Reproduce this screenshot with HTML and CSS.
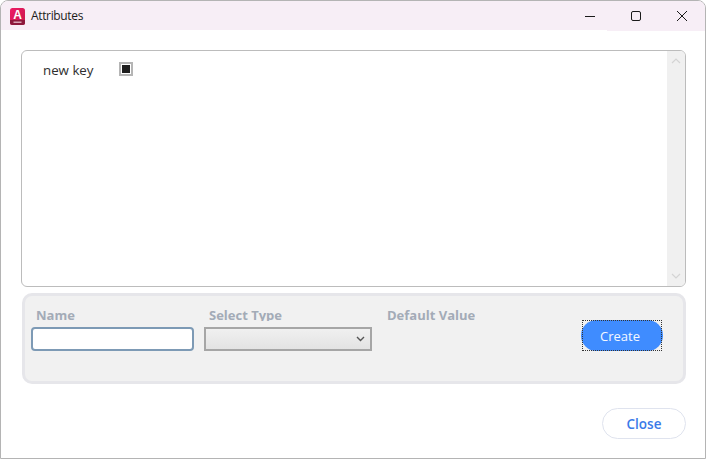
FILE: index.html
```html
<!DOCTYPE html>
<html lang="en">
<head>
<meta charset="utf-8">
<title>Attributes</title>
<link rel="stylesheet" href="styles.css">
</head>
<body>
<div class="window">
  <header class="titlebar">
    <svg class="app-icon" width="15" height="17" viewBox="0 0 15 17">
      <defs><linearGradient id="ic" x1="0" y1="0" x2="1" y2="1"><stop offset="0" stop-color="#ee1c66"/><stop offset="1" stop-color="#c8174a"/></linearGradient></defs>
      <rect x="0" y="0" width="15" height="17" rx="2.5" fill="url(#ic)"/>
      <path d="M0 12 H15 V14.5 A2.5 2.5 0 0 1 12.5 17 H2.5 A2.5 2.5 0 0 1 0 14.5 Z" fill="#8c1a3c"/>
      <text x="7.5" y="10.5" class="icon-a" text-anchor="middle">A</text>
      <rect x="3.5" y="13.5" width="8" height="1.5" fill="#d9a3b4"/>
    </svg>
    <span class="title">Attributes</span>
    <div class="controls">
      <svg class="ctl" width="46" height="30" viewBox="0 0 46 30"><path d="M18 15.5 H28" stroke="#1a1a1a" stroke-width="1"/></svg>
      <svg class="ctl" width="46" height="30" viewBox="0 0 46 30"><rect x="18.5" y="10.5" width="9" height="9" rx="1.5" fill="none" stroke="#1a1a1a" stroke-width="1"/></svg>
      <svg class="ctl" width="46" height="30" viewBox="0 0 46 30"><path d="M18 10 L28 20 M28 10 L18 20" stroke="#1a1a1a" stroke-width="1"/></svg>
    </div>
  </header>
  <main class="content">
    <section class="listbox">
      <div class="list">
        <div class="row">
          <span class="key">new key</span>
          <span class="check"><span class="check-mark"></span></span>
        </div>
      </div>
      <div class="scrollbar">
        <svg width="10" height="6" viewBox="0 0 10 6"><path d="M1 5 L5 1 L9 5" fill="none" stroke="#d4d4d4" stroke-width="1.2"/></svg>
        <svg width="10" height="6" viewBox="0 0 10 6"><path d="M1 1 L5 5 L9 1" fill="none" stroke="#d4d4d4" stroke-width="1.2"/></svg>
      </div>
    </section>
    <section class="panel">
      <div class="field field-name">
        <label class="label">Name</label>
        <div class="input"></div>
      </div>
      <div class="field field-type">
        <label class="label">Select Type</label>
        <div class="select">
          <svg width="9" height="6" viewBox="0 0 9 6"><path d="M1 1 L4.5 4.5 L8 1" fill="none" stroke="#555" stroke-width="1.4"/></svg>
        </div>
      </div>
      <div class="field field-default">
        <label class="label">Default Value</label>
      </div>
      <button class="create">Create</button>
    </section>
    <footer class="footer">
      <button class="close">Close</button>
    </footer>
  </main>
</div>
</body>
</html>
```
FILE: styles.css
```css
* { box-sizing: border-box; }
html, body { margin: 0; padding: 0; background: #fff; }
body { font-family: "Open Sans", "Noto Sans", sans-serif; }
.window {
  width: 706px;
  height: 459px;
  border: 1px solid #b4b4b4;
  border-radius: 8px 8px 0 0;
  overflow: hidden;
  display: flex;
  flex-direction: column;
  background: #fff;
}
.titlebar {
  position: relative;
  height: 29px;
  flex: none;
  background: #f7eef6;
  display: flex;
  align-items: center;
  padding-left: 9px;
}
.titlebar::after {
  content: "";
  position: absolute;
  right: 0;
  bottom: -1px;
  width: 98px;
  height: 1px;
  background: #f7eef6;
}
.app-icon { flex: none; margin-top: 1px; }
.icon-a { font-family: "Liberation Sans", sans-serif; font-size: 12px; font-weight: 700; fill: #fff; }
.title { margin-left: 6px; font-size: 12px; letter-spacing: -0.35px; color: #1c1c1c; }
.controls { margin-left: auto; display: flex; }
.ctl { display: block; flex: none; }
.content { flex: 1; display: flex; flex-direction: column; padding: 20px 19px 0 20px; }
.listbox {
  height: 237px;
  border: 1px solid #bcbcbc;
  border-radius: 6px;
  display: flex;
  overflow: hidden;
}
.list { flex: 1; padding: 9px 21px; }
.row { display: flex; align-items: center; height: 20px; }
.key { width: 76px; font-size: 13.3px; color: #2e2e2e; }
.check {
  width: 14px; height: 14px;
  border: 2px solid #b5b5b5;
  background: #fff;
  display: flex; align-items: center; justify-content: center;
  margin-top: -2px;
}
.check-mark { width: 8px; height: 8px; background: #1e1e1e; }
.scrollbar {
  width: 18px;
  background: #f0f0f0;
  display: flex;
  flex-direction: column;
  justify-content: space-between;
  align-items: center;
  padding: 7px 0;
}
.scrollbar svg { display: block; }
.panel {
  height: 91px;
  margin: 6px 0 0 1px;
  border: 3px solid #e6e6ea;
  border-radius: 10px;
  background: #f1f1f1;
  display: flex;
  align-items: flex-start;
  padding: 0 0 0 6px;
}
.field { display: flex; flex-direction: column; flex: none; }
.field-name { width: 163px; }
.field-type { width: 168px; margin-left: 10px; }
.field-default { margin-left: 10px; }
.label {
  display: block;
  height: 14px;
  margin: 11px 0 6px;
  padding-left: 5px;
  font-size: 13px;
  line-height: 16px;
  font-weight: 700;
  color: #a3abb7;
  overflow: hidden;
  white-space: nowrap;
}
.input {
  height: 24px;
  border: 2px solid #7d9ab5;
  border-radius: 4px;
  background: #fff;
}
.select {
  height: 24px;
  border: 2px solid #a6a6a6;
  background: linear-gradient(#f0f0f0, #e3e3e3);
  display: flex;
  align-items: center;
  justify-content: flex-end;
  padding-right: 5px;
}
.select svg { display: block; }
.create {
  position: relative;
  flex: none;
  width: 82px;
  height: 31px;
  margin: 24px 20px 0 auto;
  border: 0;
  border-radius: 16px;
  background: #3f8cff;
  color: #f4f8ff;
  font-family: inherit;
  font-size: 13px;
  padding: 0 4px 0 0;
}
.create::after {
  content: "";
  position: absolute;
  inset: 0 1px;
  border: 1px dotted #333;
}
.footer { display: flex; justify-content: flex-end; padding-top: 24px; }
.close {
  width: 84px;
  height: 31px;
  border: 1px solid #dfe3ee;
  border-radius: 16px;
  background: #fff;
  color: #3a7ae8;
  font-family: inherit;
  font-size: 13.5px;
  font-weight: 600;
  padding: 0;
}
```
